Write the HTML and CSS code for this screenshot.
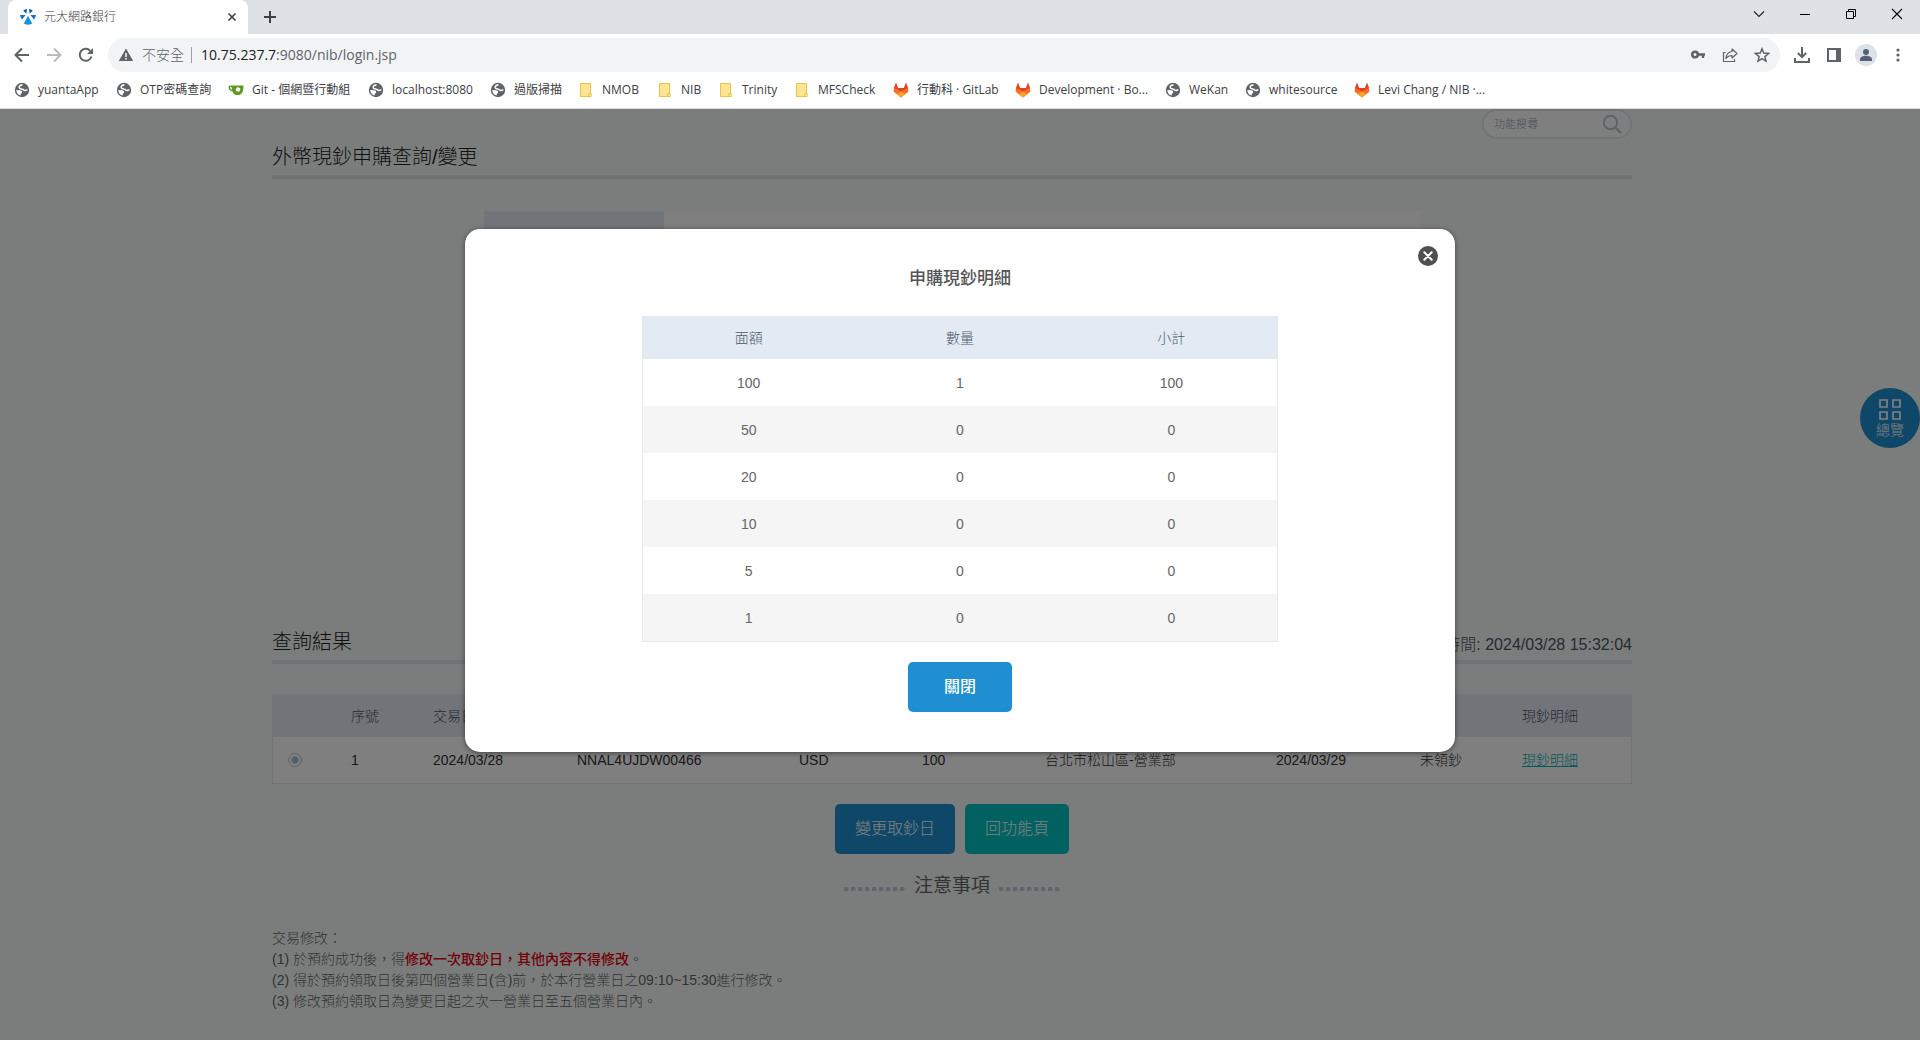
FILE: index.html
```html
<!DOCTYPE html>
<html lang="zh-Hant">
<head>
<meta charset="utf-8">
<title>元大網路銀行</title>
<link rel="stylesheet" href="styles.css">
</head>
<body>
<svg class="sprite" aria-hidden="true">
  <symbol id="globe" viewBox="0 0 16 16">
    <circle cx="8" cy="8" r="7.200" fill="#5f6368"/>
    <path d="M8.500 2.800C6.500 3.200 5 4.300 5.200 5.600c.2 1.500 2.200 1.300 3.300 1.700 1.200.4 1.300 1.400 2.300 1.300.9-.1 1.400-.9 2.600-.6" fill="none" stroke="#fff" stroke-width="1.500"/>
    <path d="M2.300 8l4 .3q2.300.6 1.900 2.100-.3.900-1.300 1.100l-.3 2Q2.500 12.500 2.300 8z" fill="#fff"/>
  </symbol>
  <symbol id="folder" viewBox="0 0 16 16">
    <path d="M2.500 1.500h10v10h-1.500v3h-8.500z" fill="#ffe591" stroke="#e8c54a"/>
    <path d="M11 11.500h2.200v3h-2.200z" fill="#fff0b8" stroke="#e8c54a"/>
  </symbol>
  <symbol id="gitlab" viewBox="0 0 16 16">
    <path d="M8 15.500L.5 9.500 1 6.200 3 .8 5 6h6l2-5.200 2 5.400.5 3.300z" fill="#fc6d26"/>
    <path d="M1 6.200L3 .8 5 6h6l2-5.200 2 5.400-3.500 1.300L8 10 4.500 7.500z" fill="#e24329"/>
    <path d="M8 15.500l-4-3.200 4-3 4 3z" fill="#fca326"/>
  </symbol>
</svg>

<header class="browser">
  <div class="tabstrip">
    <div class="tab">
      <svg class="i16" viewBox="0 0 16 16"><path d="M3.200 1.500Q5 .3 7 .1L6.300 4.800zM9 .1q2.200.2 3.800 1.400L9.700 4.800z" fill="#0b57a8"/><path d="M0 6h5.600l-3.500 4.500Q.3 8.500 0 6zM16 6h-5.600l3.500 4.500q1.800-2 2.100-4.500z" fill="#1273c4"/><path d="M8 6.800l4.200 7.800Q8 17 3.800 14.600z" fill="#1b93dc"/></svg>
      <span class="tab-title">元大網路銀行</span>
      <button class="bare" aria-label="關閉分頁"><svg class="i16" viewBox="0 0 16 16"><path d="M4.500 4.500l7 7M11.500 4.500l-7 7" stroke="#3c4043" stroke-width="1.600"/></svg></button>
    </div>
    <button class="bare newtab" aria-label="新增分頁"><svg class="i16" viewBox="0 0 16 16"><path d="M8 2v12M2 8h12" stroke="#3c4043" stroke-width="2"/></svg></button>
    <div class="window-buttons">
      <button class="bare" aria-label="搜尋分頁"><svg class="i16" viewBox="0 0 16 16"><path d="M3 5.500l5 5 5-5" fill="none" stroke="#222" stroke-width="1.100"/></svg></button>
      <button class="bare" aria-label="最小化"><svg class="i16" viewBox="0 0 16 16"><path d="M3 8.500h10" stroke="#000"/></svg></button>
      <button class="bare" aria-label="還原"><svg class="i16" viewBox="0 0 16 16"><path d="M3.500 5.500h7v7h-7zM5.500 5V3.500h7v7H11" fill="none" stroke="#000"/></svg></button>
      <button class="bare" aria-label="關閉"><svg class="i16" viewBox="0 0 16 16"><path d="M3 3l10 10M13 3L3 13" stroke="#000" stroke-width="1.100"/></svg></button>
    </div>
  </div>

  <div class="toolbar">
    <button class="bare" aria-label="上一頁"><svg class="i16" viewBox="0 0 16 16"><path d="M15 8H2.500M8 1.500L1.500 8 8 14.500" fill="none" stroke="#5f6368" stroke-width="2"/></svg></button>
    <button class="bare" aria-label="下一頁"><svg class="i16" viewBox="0 0 16 16"><path d="M1 8h12.500M8 1.500L14.500 8 8 14.500" fill="none" stroke="#babcbe" stroke-width="2"/></svg></button>
    <button class="bare" aria-label="重新載入"><svg class="i16" viewBox="0 0 16 16"><path d="M13.500 9.500A6 6 0 1 1 12.200 3.800" fill="none" stroke="#5f6368" stroke-width="2"/><path d="M15 1v6H9z" fill="#5f6368"/></svg></button>
    <div class="omnibox">
      <svg class="i16" viewBox="0 0 16 16"><path d="M8 1.500L15.200 14H.8z" fill="#5f6368"/><path d="M8 6v4M8 11v1.500" stroke="#fff" stroke-width="1.500"/></svg>
      <span class="unsafe">不安全</span>
      <span class="url"><b>10.75.237.7</b>:9080/nib/login.jsp</span>
      <div class="omni-icons">
        <svg class="i16" viewBox="0 0 16 16"><circle cx="5" cy="7.500" r="2.800" fill="none" stroke="#5f6368" stroke-width="2.600"/><path d="M8 7.500h7M13 7.500v3.500" stroke="#5f6368" stroke-width="2.400"/></svg>
        <svg class="i16" viewBox="0 0 16 16"><path d="M3.500 5.500H1.500v9h11v-2.500" fill="none" stroke="#5f6368" stroke-width="1.200"/><path d="M10 2l5 4.500-5 4.500V8.500c-3 0-4.500 1-6 3 .2-3.500 2.200-6.500 6-7z" fill="none" stroke="#5f6368" stroke-width="1.200" stroke-linejoin="round"/></svg>
        <svg class="i16" viewBox="0 0 16 16"><path d="M8 1.800l1.800 4.300 4.700.4-3.600 3.100 1.100 4.600-4-2.500-4 2.500 1.100-4.600L1.500 6.500l4.700-.4z" fill="none" stroke="#5f6368" stroke-width="1.500"/></svg>
      </div>
    </div>
    <div class="tool-icons">
      <svg class="i16" viewBox="0 0 16 16"><path d="M8 0v10M3.800 6L8 10.200 12.200 6M1 11v4h14v-4" fill="none" stroke="#5f6368" stroke-width="2"/></svg>
      <svg class="i16" viewBox="0 0 16 16"><path d="M2 2h12v12H2z" fill="none" stroke="#5f6368" stroke-width="2"/><path d="M10 1h5v14h-5z" fill="#5f6368"/></svg>
      <span class="avatar"><svg class="i16" viewBox="0 0 16 16"><circle cx="8" cy="5" r="3" fill="#56607a"/><path d="M2 14v-1.500c0-5 12-5 12 0V14z" fill="#56607a"/></svg></span>
      <svg class="i16" viewBox="0 0 16 16"><g fill="#5f6368"><circle cx="8" cy="3" r="1.600"/><circle cx="8" cy="8" r="1.600"/><circle cx="8" cy="13" r="1.600"/></g></svg>
    </div>
  </div>

  <nav class="bookmarks">
    <a href="#"><svg class="i16"><use href="#globe"/></svg>yuantaApp</a>
    <a href="#"><svg class="i16"><use href="#globe"/></svg>OTP密碼查詢</a>
    <a href="#"><svg class="i16" viewBox="0 0 16 16"><path d="M3.500 3.500h12q.3 8.500-4.500 9.500H8Q5 12 4.500 9.500.5 9 .5 4.500q1-1.500 3-1zM2 5q0 2.200 2 3L3.500 5z" fill="#609926" fill-rule="evenodd"/><rect x="8" y="5.500" width="4" height="4" rx="1" fill="#fff" transform="rotate(25 10 7.500)"/></svg>Git - 個網暨行動組</a>
    <a href="#"><svg class="i16"><use href="#globe"/></svg>localhost:8080</a>
    <a href="#"><svg class="i16"><use href="#globe"/></svg>過版掃描</a>
    <a href="#"><svg class="i16"><use href="#folder"/></svg>NMOB</a>
    <a href="#"><svg class="i16"><use href="#folder"/></svg>NIB</a>
    <a href="#"><svg class="i16"><use href="#folder"/></svg>Trinity</a>
    <a href="#"><svg class="i16"><use href="#folder"/></svg>MFSCheck</a>
    <a href="#"><svg class="i16"><use href="#gitlab"/></svg>行動科 · GitLab</a>
    <a href="#"><svg class="i16"><use href="#gitlab"/></svg>Development · Bo...</a>
    <a href="#"><svg class="i16"><use href="#globe"/></svg>WeKan</a>
    <a href="#"><svg class="i16"><use href="#globe"/></svg>whitesource</a>
    <a href="#"><svg class="i16"><use href="#gitlab"/></svg>Levi Chang / NIB ·...</a>
  </nav>
</header>

<div class="viewport">
  <main class="page">
    <div class="container">
      <form class="search">
        <input type="text" placeholder="功能搜尋" aria-label="功能搜尋">
        <button class="bare" type="button" aria-label="搜尋"><svg class="i20" viewBox="0 0 20 20"><circle cx="8.500" cy="8.500" r="6.700" fill="none" stroke="#b9c8d2" stroke-width="2"/><path d="M13.300 13.300l5 5" stroke="#b9c8d2" stroke-width="2.500" stroke-linecap="round"/></svg></button>
      </form>
      <div class="heading"><h1>外幣現鈔申購查詢/變更</h1></div>
      <div class="filter"><div class="filter-label"></div><div class="filter-value"></div></div>
      <div class="heading"><h2>查詢結果</h2><span class="time">查詢時間: 2024/03/28 15:32:04</span></div>

      <table class="results">
        <colgroup><col class="c-pick"><col class="c-no"><col class="c-date"><col class="c-ref"><col class="c-amt"><col class="c-amt"><col class="c-branch"><col class="c-date"><col class="c-state"><col></colgroup>
        <thead><tr><th></th><th>序號</th><th>交易日期</th><th>交易編號</th><th>幣別</th><th>金額</th><th>取鈔分行</th><th>取鈔日</th><th>狀態</th><th>現鈔明細</th></tr></thead>
        <tbody><tr><td><input type="radio" name="pick" aria-label="選擇第 1 筆" checked></td><td>1</td><td>2024/03/28</td><td>NNAL4UJDW00466</td><td>USD</td><td>100</td><td>台北市松山區-營業部</td><td>2024/03/29</td><td>未領鈔</td><td><a href="#">現鈔明細</a></td></tr></tbody>
      </table>

      <div class="actions">
        <button class="btn">變更取鈔日</button>
        <button class="btn btn-teal">回功能頁</button>
      </div>

      <h3 class="notice-title">注意事項</h3>
      <div class="notice">
        <p>交易修改：</p>
        <p>(1) 於預約成功後，得<strong>修改一次取鈔日，其他內容不得修改</strong>。</p>
        <p>(2) 得於預約領取日後第四個營業日(含)前，於本行營業日之09:10~15:30進行修改。</p>
        <p>(3) 修改預約領取日為變更日起之次一營業日至五個營業日內。</p>
      </div>
    </div>
  </main>

  <button class="overview">
    <svg class="grid-icon" viewBox="0 0 22 22"><path d="M1 1h7v7H1zM14 1h7v7h-7zM1 13h7v7H1zM14 13h7v7h-7z" fill="none" stroke="#fff" stroke-width="1.700"/></svg>
    總覽
  </button>

  <div class="overlay">
    <section class="modal" role="dialog" aria-labelledby="dlg">
      <button class="bare modal-close" aria-label="關閉"><svg class="i20" viewBox="0 0 20 20"><circle cx="10" cy="10" r="10" fill="#4f4f4f"/><path d="M6.300 6.300l7.400 7.400M13.700 6.300l-7.400 7.400" stroke="#fff" stroke-width="2" stroke-linecap="round"/></svg></button>
      <h2 id="dlg">申購現鈔明細</h2>
      <table class="detail">
        <thead><tr><th>面額</th><th>數量</th><th>小計</th></tr></thead>
        <tbody>
          <tr><td>100</td><td>1</td><td>100</td></tr>
          <tr><td>50</td><td>0</td><td>0</td></tr>
          <tr><td>20</td><td>0</td><td>0</td></tr>
          <tr><td>10</td><td>0</td><td>0</td></tr>
          <tr><td>5</td><td>0</td><td>0</td></tr>
          <tr><td>1</td><td>0</td><td>0</td></tr>
        </tbody>
      </table>
      <button class="btn btn-close">關閉</button>
    </section>
  </div>
</div>
</body>
</html>
```
FILE: styles.css
```css
* { box-sizing: border-box; }
body {
  margin: 0;
  height: 100vh;
  display: flex;
  flex-direction: column;
  overflow: hidden;
  font: 300 14px/20px "Liberation Sans", "Noto Sans CJK TC", sans-serif;
  color: #333;
}
h1, h2, h3, p { margin: 0; font-weight: 300; }
button, input { font: inherit; }
svg { display: block; flex: none; }
.sprite { position: absolute; width: 0; height: 0; }
.i16 { width: 16px; height: 16px; }
.i20 { width: 20px; height: 20px; }
.bare { padding: 0; border: 0; background: none; }

/* browser frame */
.browser {
  flex: none;
  font-family: "Open Sans", "Noto Sans CJK TC", sans-serif;
  font-weight: 400;
  background: #fff;
  border-bottom: 1px solid #dadce0;
}
.tabstrip { display: flex; align-items: center; height: 34px; padding-left: 8px; background: #dee1e6; }
.tab {
  display: flex;
  align-items: center;
  gap: 8px;
  width: 240px;
  height: 34px;
  padding: 0 8px 0 12px;
  background: #fff;
  border-radius: 8px 8px 0 0;
  font-size: 12px;
  color: #3c4043;
}
.tab-title { flex: 1; font-weight: 300; }
.newtab { margin-left: 14px; }
.window-buttons { display: flex; gap: 30px; margin: 0 15px 6px auto; }
.toolbar { display: flex; align-items: center; gap: 16px; height: 42px; padding: 0 14px; }
.omnibox {
  flex: 1;
  display: flex;
  align-items: center;
  height: 34px;
  margin-left: -2px;
  margin-right: -2px;
  padding: 0 10px;
  border-radius: 17px;
  background: #f1f3f4;
  color: #5f6368;
}
.unsafe { margin-left: 8px; padding-right: 7px; line-height: 16px; border-right: 1px solid #9aa0a6; font-weight: 300; }
.url { margin-left: 9px; }
.url b { font-weight: 400; color: #202124; }
.omni-icons { display: flex; gap: 16px; margin-left: auto; }
.tool-icons { display: flex; align-items: center; gap: 16px; }
.avatar { display: grid; place-items: center; width: 22px; height: 22px; margin: 0 -3px; border-radius: 50%; background: #dde1e8; }
.bookmarks {
  display: grid;
  grid-template-columns: 102px 112px 140px 122px 88px 79px 61px 76px 99px 122px 150px 80px 109px auto;
  height: 32px;
  padding: 0 14px;
  font-size: 12px;
  white-space: nowrap;
}
.bookmarks a { display: flex; align-items: center; gap: 8px; height: 28px; color: #3c4043; text-decoration: none; }

/* bank page */
.viewport { position: relative; flex: 1; min-height: 0; overflow: hidden; background: #f7faf9; }
.page { padding-right: 16px; }
.container { max-width: 1360px; margin: 0 auto; }
.search {
  display: flex;
  align-items: center;
  width: 150px;
  height: 30px;
  margin-left: auto;
  padding: 0 8px 0 10px;
  border: 2px solid #e2eaee;
  border-radius: 15px;
  background: #fff;
}
.search input { flex: 1; min-width: 0; padding: 0; border: 0; background: none; font-size: 11px; }
.search input::placeholder { color: #8fa3b1; }
.heading {
  display: flex;
  justify-content: space-between;
  align-items: flex-end;
  height: 36px;
  margin-top: 4px;
  padding-bottom: 5px;
  border-bottom: 4px solid #e0e6ea;
}
.heading h1, .heading h2 { font-size: 20px; line-height: 26px; color: #222; }
.time { font-size: 16px; color: #4e5566; }
.filter { display: flex; width: 936px; height: 377px; margin: 32px auto 40px; }
.filter-label { width: 180px; background: #e3e8f2; }
.filter-value { flex: 1; background: #fff; }

table { border-collapse: separate; border-spacing: 0; table-layout: fixed; }
th, td { padding: 0; font-weight: 300; }
.results { width: 100%; margin-top: 30px; border: 1px solid #e0e8ec; border-top: 0; text-align: left; background: #fff; }
.results th { height: 43px; background: #e3e8f2; color: #4e5566; }
.results td { height: 46px; }
.results td a { color: #00b5b0; }
.c-pick { width: 78px; }
.c-no { width: 82px; }
.c-date { width: 144px; }
.c-ref { width: 222px; }
.c-amt { width: 123px; }
.c-branch { width: 231px; }
.c-state { width: 102px; }
.results input {
  appearance: none;
  display: block;
  width: 14px;
  height: 14px;
  margin: 0 0 0 15px;
  border: 1px solid #b9c9dc;
  border-radius: 50%;
  background: radial-gradient(circle, #a9bad4 3px, #fff 4px);
}
.actions { display: flex; justify-content: center; gap: 10px; margin-top: 20px; }
.btn {
  height: 50px;
  padding: 0 20px;
  border: 0;
  border-radius: 5px;
  background: #1f8fd1;
  color: #fff;
  font-size: 16px;
}
.btn-teal { background: #00c3c0; }
.notice-title {
  display: flex;
  justify-content: center;
  align-items: center;
  gap: 9px;
  margin-top: 18px;
  font-size: 19px;
  line-height: 28px;
  font-weight: 400;
  color: #666;
}
.notice-title::before, .notice-title::after {
  content: "";
  width: 61px;
  height: 4px;
  margin-top: 6px;
  background: radial-gradient(circle at 2px 2px, #bccdd8 2px, transparent 3px) 0 0 / 7px 4px;
}
.notice { margin-top: 28px; line-height: 21px; color: #666; }
.notice strong { font-weight: 500; color: #e6000f; }

.overview {
  position: absolute;
  top: 279px;
  right: 0;
  display: flex;
  flex-direction: column;
  align-items: center;
  width: 60px;
  height: 60px;
  padding: 11px 0 0;
  border: 0;
  border-radius: 50%;
  background: #1f8fd1;
  color: #fff;
  font-size: 14px;
  line-height: 18px;
}
.grid-icon { width: 22px; height: 22px; }

/* dialog */
.overlay { position: absolute; inset: 0; padding-top: 120px; background: rgba(0, 0, 0, .5); }
.modal {
  position: relative;
  display: flex;
  flex-direction: column;
  align-items: center;
  width: 990px;
  max-width: 100%;
  margin: 0 auto;
  padding: 37px 0 40px;
  border-radius: 15px;
  background: #fff;
  box-shadow: 0 1px 5px rgba(0, 0, 0, .5);
}
.modal h2 { font-size: 17px; line-height: 26px; font-weight: 500; color: #555; }
.modal-close { position: absolute; top: 17px; right: 17px; }
.detail { width: 636px; margin: 24px 0 20px; border: 1px solid #e3eaf0; border-top: 0; text-align: center; color: #666; }
.detail th { height: 43px; background: #e3eaf3; color: #4e5b6e; }
.detail td { height: 47px; }
.detail tbody tr:nth-child(even) { background: #f5f5f5; }
.btn-close { width: 104px; font-weight: 500; }
```
